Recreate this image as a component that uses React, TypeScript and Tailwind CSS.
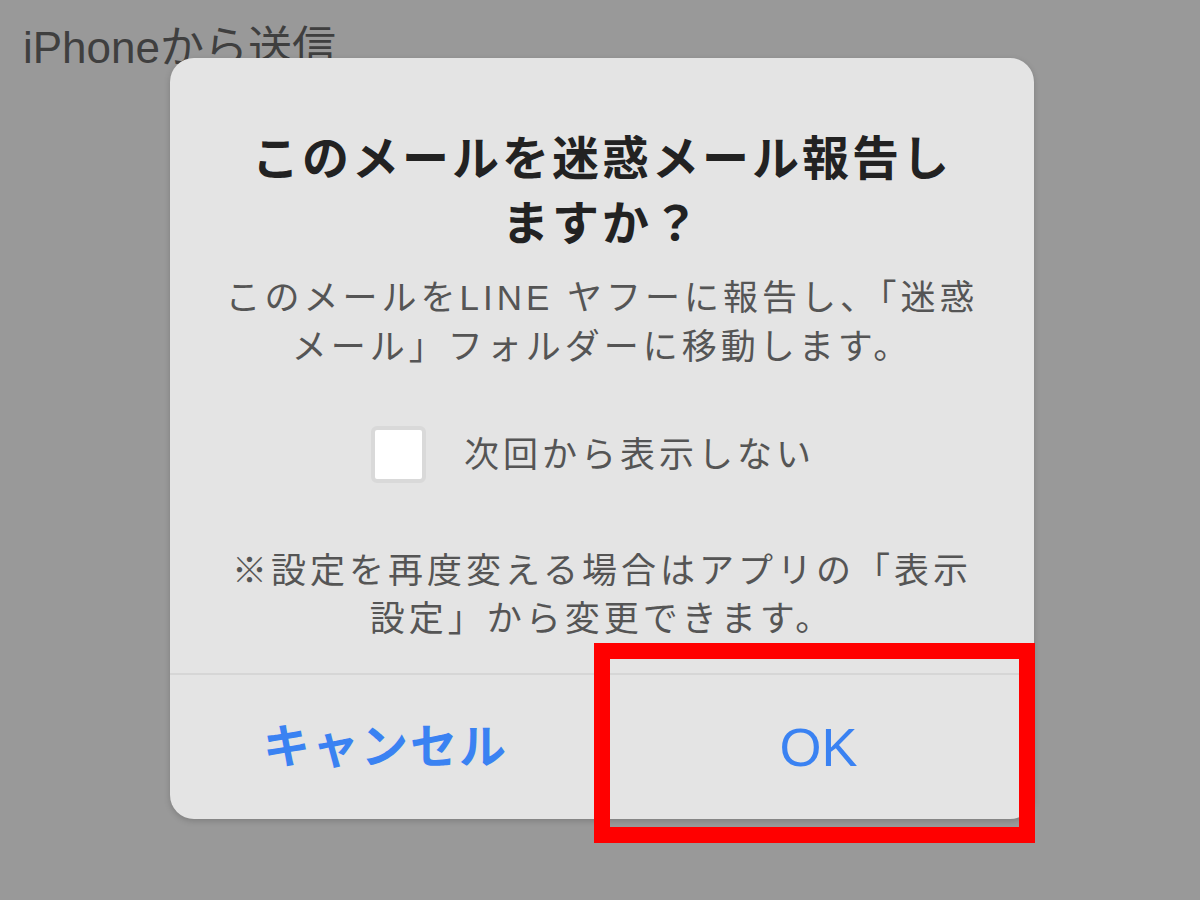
import React from "react";

const FONT = "font-['Liberation_Sans','Noto_Sans_CJK_JP',sans-serif]";

export default function App() {
  return (
    <div className={`relative w-[1200px] h-[900px] overflow-hidden bg-[#999999] ${FONT}`}>
      {/* Mail body behind the sheet */}
      <div className="pl-[23px] pt-[24px]">
        <p className="text-[44px] leading-[48px] text-[#3f3f3f]">iPhoneから送信</p>
      </div>

      {/* Alert dialog */}
      <div className="absolute left-[170px] top-[58px] w-[864px] h-[761px] rounded-[24px] bg-[#e4e4e4] shadow-[0_2px_6px_rgba(0,0,0,0.18)] flex flex-col">
        <div className="flex flex-col items-center pt-[68px] pb-[30px] border-b-2 border-[#d6d6d6]">
          <h2 className="text-center text-[47px] leading-[65px] font-bold tracking-[3px] text-[#222222]">
            このメールを迷惑メール報告し
            <br />
            ますか？
          </h2>

          <p className="mt-[17px] text-center text-[35px] leading-[49px] tracking-[4px] text-[#555555]">
            このメールをLINE ヤフーに報告し、「迷惑
            <br />
            メール」フォルダーに移動します。
          </p>

          <div className="mt-[55px] flex items-center gap-[38px] -ml-[18px]">
            <div className="w-[55px] h-[57px] rounded-[6px] border-[4px] border-[#d9d9d9] bg-white" />
            <span className="text-[35px] leading-[48px] tracking-[4px] text-[#555555]">次回から表示しない</span>
          </div>

          <p className="mt-[64px] text-center text-[35px] leading-[48px] tracking-[4px] text-[#555555]">
            ※設定を再度変える場合はアプリの「表示
            <br />
            設定」から変更できます。
          </p>
        </div>

        <div className="flex flex-1">
          <button className="flex-1 flex items-center justify-center border-r-2 border-[#d6d6d6] text-[47px] font-semibold tracking-[2px] text-[#3a82f2]">
            キャンセル
          </button>
          <button className="flex-1 flex items-center justify-center text-[54px] text-[#3a82f2]">
            OK
          </button>
        </div>
      </div>

      {/* Red highlight around OK */}
      <div className="absolute left-[594px] top-[643px] w-[441px] h-[200px] border-[16px] border-[#ff0000]" />
    </div>
  );
}
